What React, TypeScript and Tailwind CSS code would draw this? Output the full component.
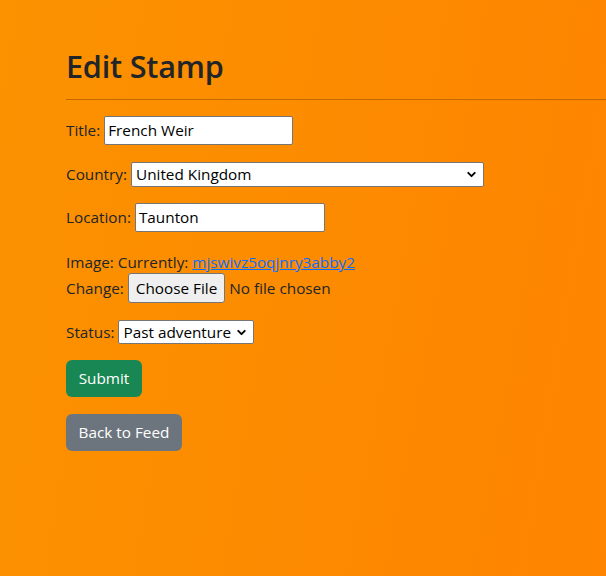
import { ChevronDown } from "lucide-react";

const font = "font-['Open_Sans','Noto_Sans',sans-serif]";

function Select({ value, width }: { value: string; width: string }) {
  return (
    <div
      className={`${width} h-full flex items-center justify-between bg-white border border-[#767676] rounded-[2px] pl-[4px] pr-[5px] text-black`}
    >
      <span>{value}</span>
      <ChevronDown size={13} strokeWidth={3.5} />
    </div>
  );
}

export default function App() {
  return (
    <div
      className={`min-h-[576px] w-full bg-[linear-gradient(100deg,#fb9200,#fe8400)] text-[#212529] text-[15.3px] overflow-hidden ${font}`}
    >
      <div className="pl-[66px] pt-[46px]">
        <h2 className="text-[30.6px] font-semibold leading-[40px] tracking-[-0.2px]">Edit Stamp</h2>
        <hr className="mt-[13px] border-0 border-t border-[#c46a00]" />

        <div className="mt-[16px] h-[29px] flex items-center gap-[4px]">
          <span>Title:</span>
          <div className="w-[189px] h-full flex items-center bg-white border border-[#767676] rounded-[2px] px-[3px] text-black">
            French Weir
          </div>
        </div>

        <div className="mt-[17px] h-[25px] flex items-center gap-[4px]">
          <span>Country:</span>
          <Select value="United Kingdom" width="w-[353px]" />
        </div>

        <div className="mt-[16px] h-[29px] flex items-center gap-[4px]">
          <span>Location:</span>
          <div className="w-[190px] h-full flex items-center bg-white border border-[#767676] rounded-[2px] px-[3px] text-black">
            Taunton
          </div>
        </div>

        <div className="mt-[19px] h-[22px] flex items-center">
          <span>
            Image: Currently:{" "}
            <a href="#" className="text-[#0d6efd] underline">
              mjswivz5oqjnry3abby2
            </a>
          </span>
        </div>

        <div className="h-[30px] flex items-center gap-[4px]">
          <span>Change:</span>
          <div className="h-full flex items-center bg-[#efefef] border border-[#767676] rounded-[3px] px-[7px] text-black">
            Choose File
          </div>
          <span>No file chosen</span>
        </div>

        <div className="mt-[17px] h-[24px] flex items-center gap-[4px]">
          <span>Status:</span>
          <Select value="Past adventure" width="w-[136px]" />
        </div>

        <button className="mt-[16px] h-[37px] w-[76px] rounded-[6px] bg-[#198754] text-white block">
          Submit
        </button>

        <button className="mt-[17px] h-[37px] w-[116px] rounded-[6px] bg-[#6c757d] text-white block">
          Back to Feed
        </button>
      </div>
    </div>
  );
}
